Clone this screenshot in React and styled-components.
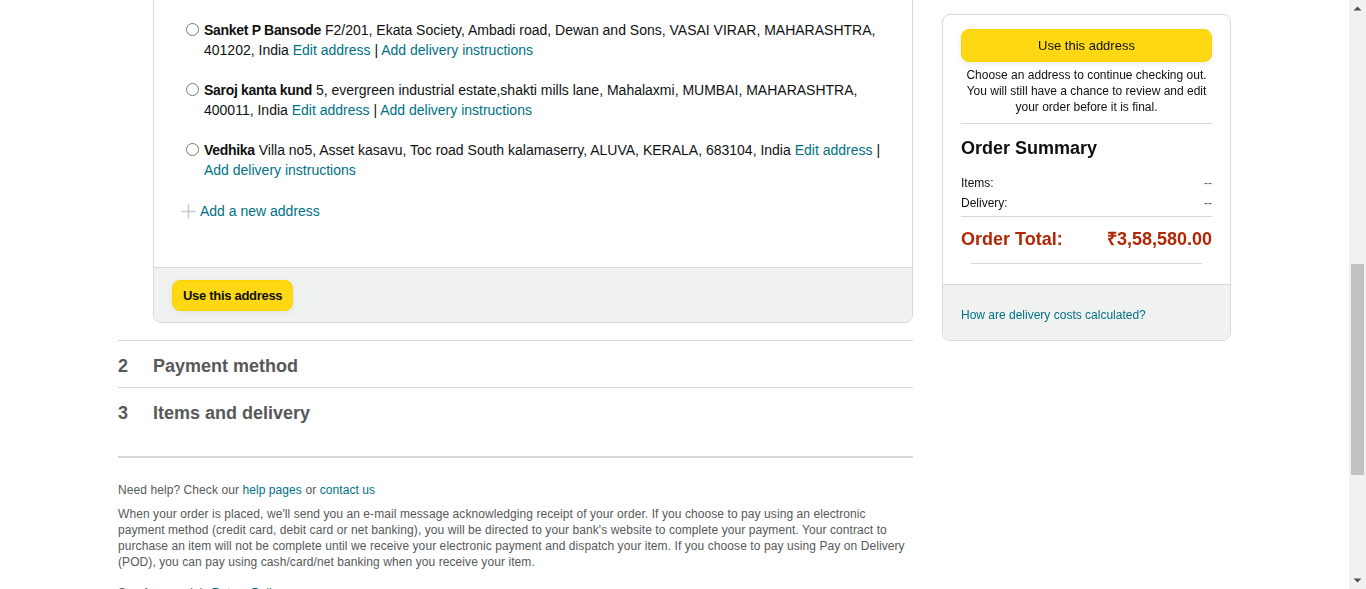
import React, { useLayoutEffect, useRef, useState } from 'react';
import styled, { createGlobalStyle } from 'styled-components';

const GlobalStyle = createGlobalStyle`
  html, body { margin: 0; padding: 0; height: 100%; overflow: hidden; background: #fff; }
  body { font-family: "Liberation Sans", Arial, sans-serif; color: #0f1111; }
  #root { height: 100%; }
  * { box-sizing: border-box; }
`;

const Shell = styled.div`
  display: flex;
  height: 100vh;
`;

const Viewport = styled.div`
  flex: 1;
  min-width: 0;
  height: 100%;
  overflow-y: scroll;
  overflow-x: hidden;
  scrollbar-width: none;
  &::-webkit-scrollbar { display: none; }
`;

const Rail = styled.div`
  flex: none;
  width: 17px;
  height: 100%;
  display: flex;
  flex-direction: column;
  background: #f1f1f1;
`;

const RailButton = styled.div`
  flex: none;
  height: 17px;
  display: flex;
  align-items: center;
  justify-content: center;
`;

const Track = styled.div`
  flex: 1;
  position: relative;
`;

const Thumb = styled.div`
  position: absolute;
  left: 2px;
  right: 2px;
  background: #c1c1c1;
`;

const TopBar = styled.header`
  height: 70px;
  display: flex;
  align-items: center;
  justify-content: space-between;
  padding: 0 120px;
  background: linear-gradient(#f7f7f7, #eaeded);
  border-bottom: 1px solid #ddd;
`;

const Logo = styled.div`
  font-size: 26px;
  font-weight: 700;
  color: #111;
  letter-spacing: -0.5px;
`;

const TopTitle = styled.h1`
  margin: 0;
  font-size: 28px;
  font-weight: 400;
  color: #0f1111;
`;

const Layout = styled.div`
  width: 1113px;
  margin: 0 auto;
  padding-top: 44px;
  display: grid;
  grid-template-columns: 795px 289px;
  column-gap: 29px;
  align-items: start;
`;

const Main = styled.main`
  display: flex;
  flex-direction: column;
`;

const Step = styled.div`
  display: flex;
  align-items: flex-start;
  padding: 13px 0 ${p => p.$pb || 9}px;
  border-top: ${p => (p.$noTop ? 'none' : '1px solid #d5d9d9')};
  font-size: 18px;
  line-height: 24px;
  font-weight: 700;
  color: ${p => (p.$active ? '#c45500' : '#565959')};
`;

const StepNum = styled.span`
  width: 35px;
  flex: none;
`;

const Card = styled.section`
  margin-left: 35px;
  margin-bottom: 17px;
  border: 1px solid #d5d9d9;
  border-radius: 8px;
  overflow: hidden;
`;

const CardBody = styled.div`
  padding: 18px 20px 46px 32px;
`;

const CardTitle = styled.h2`
  margin: 0 0 0 -14px;
  padding-bottom: 8px;
  font-size: 16px;
  line-height: 24px;
  font-weight: 700;
  border-bottom: 1px solid #d5d9d9;
`;

const List = styled.div`
  display: flex;
  flex-direction: column;
  gap: 20px;
  margin-top: ${p => p.$mt || 0}px;
`;

const Row = styled.label`
  display: flex;
  align-items: flex-start;
  gap: 6px;
  font-size: 14px;
  line-height: 20px;
  color: #0f1111;
`;

const Radio = styled.span`
  flex: none;
  width: 13px;
  height: 13px;
  margin-top: 3px;
  margin-right: -1px;
  border: 1px solid #767676;
  border-radius: 50%;
  background: #fff;
`;

const AddrText = styled.span`
  flex: 1;
`;

const Name = styled.b`
  font-weight: 700;
  letter-spacing: -0.3px;
`;

const Link = styled.a`
  color: #007185;
  text-decoration: none;
  cursor: pointer;
`;

const AddRow = styled.div`
  display: flex;
  align-items: center;
  gap: 4px;
  margin: 21px 0 0 -5px;
  font-size: 14px;
  line-height: 20px;
  color: #007185;
`;

const CardFooter = styled.div`
  padding: 12px 18px 11px;
  background: #f0f2f2;
  border-top: 1px solid #d5d9d9;
`;

const YellowButton = styled.button`
  display: block;
  height: ${p => p.$h}px;
  width: ${p => (p.$full ? '100%' : 'auto')};
  padding: 0 10px;
  border: 1px solid #fcd200;
  border-radius: 8px;
  background: #ffd814;
  box-shadow: 0 2px 5px 0 rgba(213, 217, 217, 0.5);
  font-family: inherit;
  font-size: 13px;
  font-weight: ${p => (p.$bold ? 700 : 400)};
  letter-spacing: ${p => (p.$bold ? '-0.3px' : 'normal')};
  color: #0f1111;
  cursor: pointer;
`;

const HelpBlock = styled.div`
  border-top: 2px solid #d5d9d9;
  padding-top: 24px;
  font-size: 12px;
  line-height: 16px;
  letter-spacing: 0.08px;
  color: #565959;
`;

const Para = styled.p`
  margin: ${p => p.$mt || 0}px 0 0;
`;

const Sidebar = styled.aside`
  position: sticky;
  top: 14px;
  border: 1px solid #d5d9d9;
  border-radius: 8px;
  overflow: hidden;
  background: #fff;
`;

const SideBody = styled.div`
  padding: 14px 18px 20px;
`;

const SideHint = styled.p`
  margin: 5px 0 0;
  font-size: 12px;
  line-height: 16px;
  text-align: center;
  color: #0f1111;
`;

const Divider = styled.hr`
  border: 0;
  border-top: 1px solid #d5d9d9;
  margin: ${p => p.$m};
`;

const SummaryTitle = styled.h3`
  margin: 0;
  font-size: 18px;
  line-height: 24px;
  font-weight: 700;
  color: #0f1111;
`;

const SummaryRows = styled.div`
  margin-top: 13px;
`;

const SummaryRow = styled.div`
  display: flex;
  justify-content: space-between;
  font-size: 12px;
  line-height: 20px;
  color: #0f1111;
`;

const Dash = styled.span`
  color: #565959;
`;

const TotalRow = styled.div`
  display: flex;
  justify-content: space-between;
  margin-top: 10px;
  font-size: 18px;
  line-height: 24px;
  font-weight: 700;
  color: #b12704;
`;

const SideFooter = styled.div`
  padding: 22px 18px 17px;
  background: #f0f2f2;
  border-top: 1px solid #d5d9d9;
  font-size: 12px;
  line-height: 16px;
`;

const PageFooter = styled.footer`
  margin-top: 40px;
  padding: 30px 0 139px;
  border-top: 1px solid #e7e7e7;
  background: linear-gradient(#f7f7f7, #fff);
  text-align: center;
  font-size: 11px;
  line-height: 16px;
  color: #565959;
`;

const PlusIcon = () => (
  <svg width="15" height="15" viewBox="0 0 15 15" aria-hidden="true">
    <path d="M7.5 0.5v14M0.5 7.5h14" stroke="#c9cccc" strokeWidth="1.6" fill="none" />
  </svg>
);

const Arrow = ({ up }) => (
  <svg width="9" height="5" viewBox="0 0 9 5" aria-hidden="true">
    <path d={up ? 'M0.5 4.5L4.5 0.5L8.5 4.5Z' : 'M0.5 0.5L4.5 4.5L8.5 0.5Z'} fill="#505050" />
  </svg>
);

const earlier = [
  ['Rahul Sharma', 'Flat 302, Sai Residency, MG Road, Andheri East, Near Metro Station, MUMBAI, MAHARASHTRA, 400069, India'],
  ['Priya Nair', '14/B, Green Park Apartments, Palarivattom, Edappally Bypass Road, KOCHI, KERALA, 682025, India'],
  ['Amit Verma', 'House no 45, Sector 21, Near Community Centre, Indira Nagar, LUCKNOW, UTTAR PRADESH, 226016, India'],
  ['Sneha Patil', 'B-12, Shivaji Nagar Housing Society, FC Road, Deccan Gymkhana, PUNE, MAHARASHTRA, 411004, India'],
  ['Karthik R', 'No 8, 2nd Cross Street, Lakshmi Nagar, Porur, Opposite Bus Depot, CHENNAI, TAMIL NADU, 600116, India'],
  ['Meera Joshi', 'A-501, Sunrise Towers, Satellite Road, Jodhpur Cross Roads, AHMEDABAD, GUJARAT, 380015, India'],
  ['Arjun Menon', '22, Lake View Layout, Koramangala 5th Block, Near Forum Mall, BENGALURU, KARNATAKA, 560095, India'],
  ['Deepak Singh', 'Plot 17, Ashok Vihar Phase 2, Ring Road, Near Deep Market, NEW DELHI, DELHI, 110052, India'],
];

const visible = [
  ['Sanket P Bansode', 'F2/201, Ekata Society, Ambadi road, Dewan and Sons, VASAI VIRAR, MAHARASHTRA, 401202, India'],
  ['Saroj kanta kund', '5, evergreen industrial estate,shakti mills lane, Mahalaxmi, MUMBAI, MAHARASHTRA, 400011, India'],
  ['Vedhika', 'Villa no5, Asset kasavu, Toc road South kalamaserry, ALUVA, KERALA, 683104, India'],
];

const AddressRow = React.forwardRef(({ name, addr }, ref) => (
  <Row ref={ref}>
    <Radio />
    <AddrText>
      <Name>{name}</Name> {addr} <Link>Edit address</Link> | <Link>Add delivery instructions</Link>
    </AddrText>
  </Row>
));

export default function App() {
  const viewportRef = useRef(null);
  const anchorRef = useRef(null);
  const [thumb, setThumb] = useState({ top: 0, height: 0 });

  useLayoutEffect(() => {
    const vp = viewportRef.current;
    const a = anchorRef.current;
    if (!vp || !a) return;
    vp.scrollTop = a.getBoundingClientRect().top - vp.getBoundingClientRect().top + vp.scrollTop - 20;
    const update = () => {
      const track = vp.clientHeight - 34;
      const h = Math.max(17, Math.round((track * vp.clientHeight) / vp.scrollHeight));
      const max = vp.scrollHeight - vp.clientHeight;
      const t = max > 0 ? Math.round(((track - h) * vp.scrollTop) / max) : 0;
      setThumb({ top: t, height: h });
    };
    update();
    vp.addEventListener('scroll', update);
    return () => vp.removeEventListener('scroll', update);
  }, []);

  return (
    <>
      <GlobalStyle />
      <Shell>
        <Viewport ref={viewportRef}>
          <TopBar>
            <Logo>amazon.in</Logo>
            <TopTitle>Checkout</TopTitle>
            <span />
          </TopBar>
          <Layout>
            <Main>
              <Step $noTop $active>
                <StepNum>1</StepNum>
                <span>Select a delivery address</span>
              </Step>
              <Card>
                <CardBody>
                  <CardTitle>Your addresses</CardTitle>
                  <List $mt={16}>
                    {earlier.map(([n, a]) => (
                      <AddressRow key={n} name={n} addr={a} />
                    ))}
                    {visible.map(([n, a], i) => (
                      <AddressRow key={n} name={n} addr={a} ref={i === 0 ? anchorRef : undefined} />
                    ))}
                  </List>
                  <AddRow>
                    <PlusIcon />
                    <span>Add a new address</span>
                  </AddRow>
                </CardBody>
                <CardFooter>
                  <YellowButton $h={31} $bold>Use this address</YellowButton>
                </CardFooter>
              </Card>
              <Step>
                <StepNum>2</StepNum>
                <span>Payment method</span>
              </Step>
              <Step $pb={31}>
                <StepNum>3</StepNum>
                <span>Items and delivery</span>
              </Step>
              <HelpBlock>
                <Para>
                  Need help? Check our <Link>help pages</Link> or <Link>contact us</Link>
                </Para>
                <Para $mt={8}>
                  When your order is placed, we'll send you an e-mail message acknowledging receipt of your order. If you choose to pay using an electronic payment method (credit card, debit card or net banking), you will be directed to your bank's website to complete your payment. Your contract to purchase an item will not be complete until we receive your electronic payment and dispatch your item. If you choose to pay using Pay on Delivery (POD), you can pay using cash/card/net banking when you receive your item.
                </Para>
                <Para $mt={15}>
                  See Amazon.in's <Link>Return Policy</Link>.
                </Para>
                <Para $mt={15}>
                  Need to add more items to your order? Continue shopping on the <Link>Amazon.in homepage</Link>.
                </Para>
              </HelpBlock>
            </Main>
            <Sidebar>
              <SideBody>
                <YellowButton $full $h={33}>Use this address</YellowButton>
                <SideHint>
                  Choose an address to continue checking out. You will still have a chance to review and edit your order before it is final.
                </SideHint>
                <Divider $m="8px 0 12px" />
                <SummaryTitle>Order Summary</SummaryTitle>
                <SummaryRows>
                  <SummaryRow>
                    <span>Items:</span>
                    <Dash>--</Dash>
                  </SummaryRow>
                  <SummaryRow>
                    <span>Delivery:</span>
                    <Dash>--</Dash>
                  </SummaryRow>
                </SummaryRows>
                <Divider $m="3px 0 0" />
                <TotalRow>
                  <span>Order Total:</span>
                  <span>₹3,58,580.00</span>
                </TotalRow>
                <Divider $m="12px 10px 0" />
              </SideBody>
              <SideFooter>
                <Link>How are delivery costs calculated?</Link>
              </SideFooter>
            </Sidebar>
          </Layout>
          <PageFooter>
            Conditions of Use | Privacy Notice | © 1996-2024, Amazon.com, Inc. or its affiliates
          </PageFooter>
        </Viewport>
        <Rail>
          <RailButton>
            <Arrow up />
          </RailButton>
          <Track>
            <Thumb style={{ top: thumb.top, height: thumb.height }} />
          </Track>
          <RailButton>
            <Arrow />
          </RailButton>
        </Rail>
      </Shell>
    </>
  );
}
